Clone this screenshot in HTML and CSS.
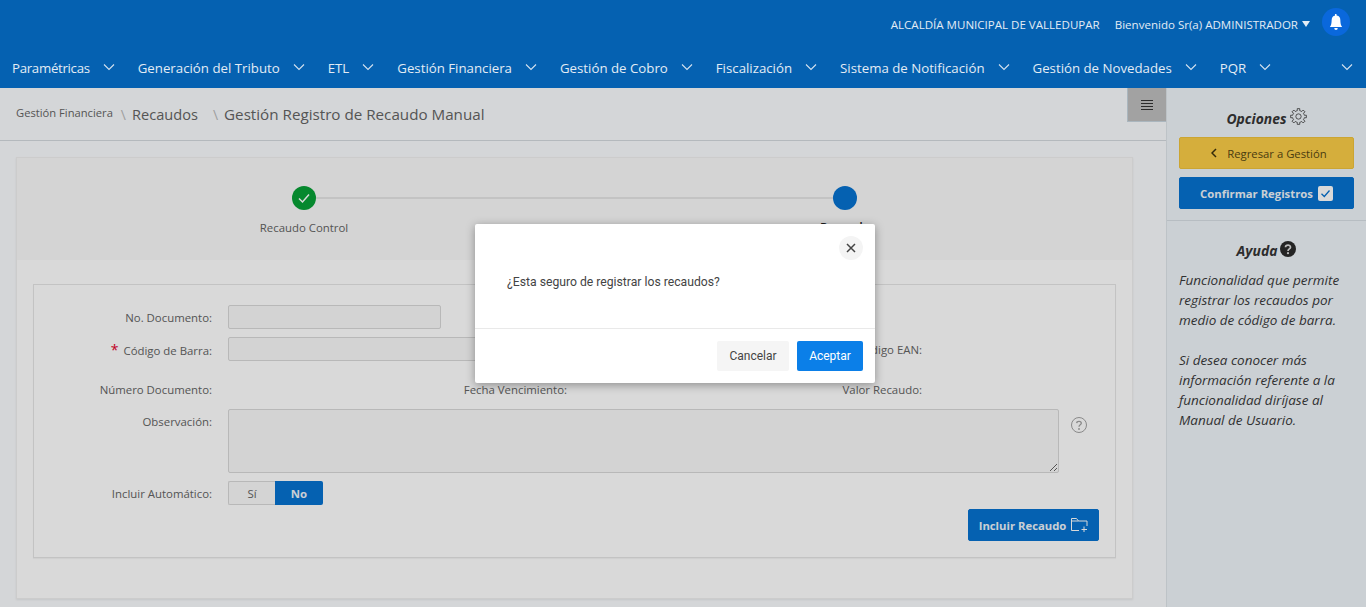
FILE: index.html
```html
<!DOCTYPE html>
<html>
	<head>
		<meta charset="utf-8">
		<title>Gestión Registro de Recaudo Manual</title>
		<link rel="stylesheet" href="styles.css">
	</head>
	<body>
		<svg class="defs" width="0" height="0">
			<defs>
				<path id="tooth" d="M5.86 2.83L6.84 2.52L6.83 .59H9.17L9.16 2.52L10.14 2.83"/>
				<path id="chev" d="M1 1.5L6 6.5L11 1.5"/>
			</defs>
		</svg>
		<!-- cabecera -->
		<header class="header">
			<div class="top-bar">
				<span class="entity">ALCALDÍA MUNICIPAL DE VALLEDUPAR</span>
				<span class="welcome">Bienvenido Sr(a) ADMINISTRADOR</span>
				<i class="caret"></i>
				<span class="bell">
					<svg width="14" height="16" viewBox="0 0 16 16" preserveAspectRatio="none"><path fill="#fff" d="M8 16a2 2 0 0 0 2-2H6a2 2 0 0 0 2 2zM8 1.900A1 1 0 1 1 8.100 0a1 1 0 0 1-.1 1.900zM8.900 1.600A5 5 0 0 1 13 6.500c0 1 .2 3.600 1.100 5.300.2.400.5.800.9 1.200H1c.4-.400.700-.800.900-1.200C2.800 10.100 3 7.500 3 6.500a5 5 0 0 1 4.100-4.900z"/></svg>
				</span>
			</div>
			<nav class="nav">
				<a class="nav-item nav-first">Paramétricas <svg class="chev" viewBox="0 0 12 8"><use href="#chev"/></svg></a>
				<a class="nav-item">Generación del Tributo <svg class="chev" viewBox="0 0 12 8"><use href="#chev"/></svg></a>
				<a class="nav-item">ETL <svg class="chev" viewBox="0 0 12 8"><use href="#chev"/></svg></a>
				<a class="nav-item">Gestión Financiera <svg class="chev" viewBox="0 0 12 8"><use href="#chev"/></svg></a>
				<a class="nav-item">Gestión de Cobro <svg class="chev" viewBox="0 0 12 8"><use href="#chev"/></svg></a>
				<a class="nav-item">Fiscalización <svg class="chev" viewBox="0 0 12 8"><use href="#chev"/></svg></a>
				<a class="nav-item">Sistema de Notificación <svg class="chev" viewBox="0 0 12 8"><use href="#chev"/></svg></a>
				<a class="nav-item">Gestión de Novedades <svg class="chev" viewBox="0 0 12 8"><use href="#chev"/></svg></a>
				<a class="nav-item">PQR <svg class="chev" viewBox="0 0 12 8"><use href="#chev"/></svg></a>
				<a class="nav-more"><svg class="chev" viewBox="0 0 12 8"><use href="#chev"/></svg></a>
			</nav>
		</header>

		<div class="page">
			<main class="main">
				<div class="crumbs">
					<span class="crumb-sm">Gestión Financiera</span>
					<span class="crumb-sep">\</span>
					<span class="crumb-md">Recaudos</span>
					<span class="crumb-sep sep-wide">\</span>
					<span class="crumb-lg">Gestión Registro de Recaudo Manual</span>
					<button class="side-toggle">
						<svg width="12" height="10" viewBox="0 0 12 10"><path stroke="#333" d="M0 .5H12M0 3.500H12M0 6.500H12M0 9.500H12"/></svg>
					</button>
				</div>

				<section class="card">
					<!-- pasos -->
					<div class="steps">
						<div class="step">
							<span class="dot dot-done">
								<svg width="14" height="14" viewBox="0 0 14 14"><path fill="none" stroke="#fff" stroke-width="1.500" d="M2 7.500L5.500 11L12 3.500"/></svg>
							</span>
							<span class="step-name">Recaudo Control</span>
						</div>
						<div class="step-line"></div>
						<div class="step">
							<span class="dot dot-now"></span>
							<span class="step-name step-now">Recaudo</span>
						</div>
					</div>

					<!-- formulario -->
					<div class="box">
						<div class="row row-doc">
							<label class="lbl">No. Documento:</label>
							<input class="field field-sm" disabled>
						</div>
						<div class="row row-code">
							<label class="lbl"><b class="req">*</b> Código de Barra:</label>
							<input class="field field-code" disabled>
							<label class="lbl">Código EAN:</label>
						</div>
						<div class="row row-info">
							<div class="cell"><label class="lbl">Número Documento:</label></div>
							<div class="cell"><label class="lbl">Fecha Vencimiento:</label></div>
							<div class="cell"><label class="lbl">Valor Recaudo:</label></div>
						</div>
						<div class="row row-obs">
							<label class="lbl">Observación:</label>
							<textarea class="field area" disabled></textarea>
							<svg class="help" width="18" height="18" viewBox="0 0 18 18"><circle cx="9" cy="9" r="7.500" fill="none" stroke="#a2a2a2"/><path fill="none" stroke="#a2a2a2" stroke-width="1.300" d="M6.700 7.100C6.800 4.800 11.300 4.800 11.300 7.200C11.300 8.800 9 8.800 9 10.700"/><circle cx="9" cy="13" r=".9" fill="#a2a2a2"/></svg>
						</div>
						<div class="row row-auto">
							<label class="lbl">Incluir Automático:</label>
							<div class="switch">
								<span class="opt">Sí</span>
								<span class="opt opt-on">No</span>
							</div>
						</div>
						<div class="row-add">
							<button class="btn btn-blue btn-add">Incluir Recaudo
								<svg width="18" height="16" viewBox="0 0 18 16"><path fill="none" stroke="#fff" d="M9 13.500H1.500V1.500H6.500L8.500 4H17V9M2 4H8.500M14 9.500V15M11.500 12.500H17"/></svg>
							</button>
						</div>
					</div>
				</section>
			</main>

			<!-- panel derecho -->
			<aside class="side">
				<div class="side-top">
					<h4 class="side-title">Opciones
						<svg class="gear" width="17" height="17" viewBox="0 0 16 16">
							<g fill="none" stroke="#444" stroke-width=".8">
								<use href="#tooth"/>
								<use href="#tooth" transform="rotate(45 8 8)"/>
								<use href="#tooth" transform="rotate(90 8 8)"/>
								<use href="#tooth" transform="rotate(135 8 8)"/>
								<use href="#tooth" transform="rotate(180 8 8)"/>
								<use href="#tooth" transform="rotate(225 8 8)"/>
								<use href="#tooth" transform="rotate(270 8 8)"/>
								<use href="#tooth" transform="rotate(315 8 8)"/>
								<circle cx="8" cy="8" r="2.500"/>
							</g>
						</svg>
					</h4>
					<button class="btn btn-yellow">
						<svg width="6" height="10" viewBox="0 0 6 10"><path fill="none" stroke="#3d320c" stroke-width="1.500" d="M5 1L1 5L5 9"/></svg>
						<span class="back-text">Regresar a Gestión</span>
					</button>
					<button class="btn btn-blue btn-confirm">Confirmar Registros
						<svg width="15" height="15" viewBox="0 0 15 15"><rect width="15" height="15" rx="2" fill="#fff"/><path fill="none" stroke="#0672d0" stroke-width="1.300" d="M3.500 7.800L6.300 10.500L11.500 4.500"/></svg>
					</button>
				</div>
				<div class="side-help">
					<h4 class="side-title">Ayuda
						<svg class="q" width="16" height="16" viewBox="0 0 16 16"><circle cx="8" cy="8" r="8" fill="#2b2b2b"/><path fill="none" stroke="#ddd" stroke-width="1.700" d="M5.500 6.200C5.600 3.500 10.500 3.500 10.500 6.200C10.500 7.900 8 7.800 8 9.900"/><circle cx="8" cy="12.200" r="1.100" fill="#ddd"/></svg>
					</h4>
					<p class="side-text">Funcionalidad que permite registrar los recaudos por medio de código de barra.</p>
					<p class="side-text">Si desea conocer más información referente a la funcionalidad diríjase al Manual de Usuario.</p>
				</div>
			</aside>

			<!-- confirmacion -->
			<div class="backdrop">
				<div class="modal">
					<div class="modal-body">
						<button class="modal-close">
							<svg width="10" height="10" viewBox="0 0 10 10"><path stroke="#444" stroke-width="1.500" d="M1 1L9 9M9 1L1 9"/></svg>
						</button>
						<p class="modal-text">¿Esta seguro de registrar los recaudos?</p>
					</div>
					<div class="modal-foot">
						<button class="m-btn m-cancel">Cancelar</button>
						<button class="m-btn m-ok">Aceptar</button>
					</div>
				</div>
			</div>
		</div>
	</body>
</html>
```

FILE: styles.css
```css
* {
	box-sizing: border-box;
}

html, body {
	height: 100%;
}

body {
	margin: 0;
	display: flex;
	flex-direction: column;
	overflow: hidden;
	font-family: "Open Sans", "Liberation Sans", sans-serif;
	font-size: 11.400px;
	color: #646464;
	background: #fafcfe;
}

.defs {
	position: absolute;
}

/* cabecera */
.header {
	height: 88px;
	flex: none;
	background: #0561b1;
	color: #e3ecf5;
}

.top-bar {
	height: 48px;
	display: flex;
	align-items: center;
	justify-content: flex-end;
	padding: 0 16px 0 0;
	font-size: 11.550px;
}

.welcome {
	margin-left: 15px;
}

.caret {
	width: 0;
	height: 0;
	margin: 0 12px 0 4px;
	border-left: 4px solid transparent;
	border-right: 4px solid transparent;
	border-top: 6px solid #e3ecf5;
}

.bell {
	width: 28px;
	height: 28px;
	border-radius: 50%;
	background: #0a68dc;
	display: flex;
	align-items: center;
	justify-content: center;
	margin-top: -4px;
}

.nav {
	height: 40px;
	display: flex;
	align-items: center;
	padding: 0 13px 0 12px;
	font-size: 13.250px;
}

.nav-item {
	display: flex;
	align-items: center;
	margin-right: 23px;
	white-space: nowrap;
}

.nav-first {
	letter-spacing: -0.3px;
}

.nav-more {
	margin-left: auto;
	display: flex;
}

.chev {
	width: 12px;
	height: 8px;
	margin-left: 13px;
	margin-top: -3px;
	fill: none;
	stroke: #d5e2ef;
	stroke-width: 1.100;
}

/* cuerpo */
.page {
	flex: 1;
	position: relative;
	display: flex;
	min-height: 0;
}

.main {
	flex: 1;
	min-width: 0;
	background: #fafcfe;
}

.crumbs {
	height: 53px;
	display: flex;
	align-items: center;
	padding: 0 0 0 16px;
	border-bottom: 1px solid #d4dade;
	position: relative;
}

.crumb-sm {
	font-size: 11.200px;
	margin-top: -3px;
}

.crumb-md {
	font-size: 14.600px;
}

.crumb-lg {
	font-size: 15.200px;
}

.crumb-sep {
	color: #bbb;
	font-size: 14px;
	margin: 0 6px 0 8px;
}

.sep-wide {
	margin: 0 6px 0 15px;
}

.side-toggle {
	position: absolute;
	top: 0;
	right: 0;
	width: 39px;
	height: 34px;
	border: 0;
	border-left: 1px solid #c8d6e0;
	border-bottom: 1px solid #c8d6e0;
	background: #bfbfbf;
	padding: 0;
	display: flex;
	align-items: center;
	justify-content: center;
}

.card {
	margin: 16px 33px 0 16px;
	height: 442px;
	background: #fff;
	border: 1px solid #f0f0f0;
	box-shadow: 0 1px 2px rgba(0, 0, 0, 0.08);
}

.steps {
	height: 102px;
	background: #f9f9f9;
	display: flex;
	justify-content: center;
	padding-top: 28px;
	margin-bottom: 24px;
}

.step {
	width: 24px;
	display: flex;
	flex-direction: column;
	align-items: center;
}

.step-line {
	width: 517px;
	height: 2px;
	margin-top: 11px;
	background: #e6e6e6;
}

.dot {
	width: 24px;
	height: 24px;
	flex: none;
	border-radius: 50%;
	display: flex;
	align-items: center;
	justify-content: center;
}

.dot-done {
	background: #08a037;
}

.dot-now {
	background: #0672d0;
}

.step-name {
	margin-top: 10px;
	white-space: nowrap;
}

.step-now {
	color: #222;
	font-weight: 600;
	font-size: 12px;
	margin-top: 9px;
}

.box {
	margin: 0 16px;
	height: 274px;
	border: 1px solid #e6e6e6;
	box-shadow: 0 1px 1px rgba(0, 0, 0, 0.04);
	padding-top: 20px;
}

.row {
	display: flex;
}

.lbl {
	width: 178px;
	height: 24px;
	flex: none;
	text-align: right;
	line-height: 26px;
	white-space: nowrap;
}

.req {
	color: #e4002b;
	font-weight: 400;
	font-size: 14px;
	margin-right: 2px;
}

.field {
	display: block;
	height: 24px;
	margin: 0 0 0 16px;
	border: 1px solid #d9d9d9;
	border-radius: 2px;
	background: #f8f8f8;
}

.field-sm {
	width: 213px;
}

.field-code {
	width: 516px;
}

.row-code {
	margin-top: 8px;
}

.row-info {
	margin-top: 16px;
	height: 24px;
}

.cell {
	width: 355px;
	flex: none;
	display: flex;
}

.row-obs {
	margin-top: 8px;
}

.area {
	width: 831px;
	height: 64px;
	resize: both;
}

.help {
	margin: 7px 0 0 11px;
}

.row-auto {
	margin-top: 8px;
}

.switch {
	display: flex;
	margin-left: 16px;
	width: 95px;
	height: 24px;
}

.opt {
	width: 47px;
	border: 1px solid #d9d9d9;
	border-right: 0;
	border-radius: 2px 0 0 2px;
	text-align: center;
	line-height: 24px;
	background: #fafafa;
}

.opt-on {
	width: 48px;
	border: 0;
	border-radius: 0 2px 2px 0;
	background: #0672d0;
	color: #eef4fa;
	font-weight: 700;
	line-height: 26px;
}

.row-add {
	display: flex;
	justify-content: flex-end;
	margin: 4px 16px 0 0;
}

/* botones */
.btn {
	font-family: inherit;
	font-size: 11.300px;
	border-radius: 2px;
	display: flex;
	align-items: center;
	justify-content: center;
	height: 32px;
	padding: 0;
}

.btn-blue {
	background: #0672d0;
	border: 1px solid #0672d0;
	color: #eef4fa;
	font-weight: 700;
}

.btn-add {
	width: 131px;
	gap: 4px;
}

/* panel derecho */
.side {
	width: 200px;
	flex: none;
	background: #eff5fa;
	border-left: 1px solid #dfe5ea;
	color: #3a3a3a;
}

.side-top {
	height: 133px;
	padding: 20px 12px 0;
	border-bottom: 1px solid #d8dee4;
}

.side-title {
	margin: 0;
	font-size: 13.900px;
	font-style: italic;
	font-weight: 700;
	color: #363636;
	display: flex;
	align-items: center;
	justify-content: center;
	gap: 3px;
	height: 20px;
}

.gear {
	margin-top: -3px;
}

.q {
	margin-top: -3px;
}

.btn-yellow {
	width: 175px;
	margin-top: 9px;
	padding-left: 5px;
	background: #fbcd47;
	border: 1px solid #efc23c;
	color: #574813;
}

.back-text {
	margin-left: 10px;
}

.btn-confirm {
	width: 175px;
	margin-top: 8px;
	gap: 5px;
}

.side-help {
	padding: 19px 12px 0;
}

.side-text {
	margin: 10px 0 0;
	font-size: 13.500px;
	font-style: italic;
	line-height: 20px;
}

.side-text + .side-text {
	margin-top: 20px;
}

/* confirmacion */
.backdrop {
	position: absolute;
	top: 0;
	left: 0;
	right: 0;
	bottom: 0;
	background: rgba(0, 0, 0, 0.15);
	padding: 136px 0 0 475px;
}

.modal {
	width: 400px;
	height: 159px;
	background: #fff;
	border-radius: 2px;
	box-shadow: 0 2px 10px rgba(0, 0, 0, 0.35);
	font-family: Roboto, "Liberation Sans", sans-serif;
	color: #444;
}

.modal-body {
	height: 105px;
	position: relative;
	padding: 51px 32px 0;
	border-bottom: 1px solid #e9e9e9;
}

.modal-close {
	position: absolute;
	top: 12px;
	right: 12px;
	width: 24px;
	height: 24px;
	padding: 0;
	border: 0;
	border-radius: 50%;
	background: #f4f4f4;
	display: flex;
	align-items: center;
	justify-content: center;
}

.modal-text {
	margin: 0;
	font-size: 12.200px;
	line-height: 14px;
}

.modal-foot {
	display: flex;
	justify-content: flex-end;
	gap: 8px;
	padding: 12px 12px 0;
}

.m-btn {
	height: 30px;
	border: 0;
	border-radius: 2px;
	padding: 0;
	font-family: inherit;
	font-size: 12px;
}

.m-cancel {
	width: 72px;
	background: #f5f5f5;
	color: #444;
}

.m-ok {
	width: 66px;
	background: #0b7fe8;
	color: #fff;
}
```
